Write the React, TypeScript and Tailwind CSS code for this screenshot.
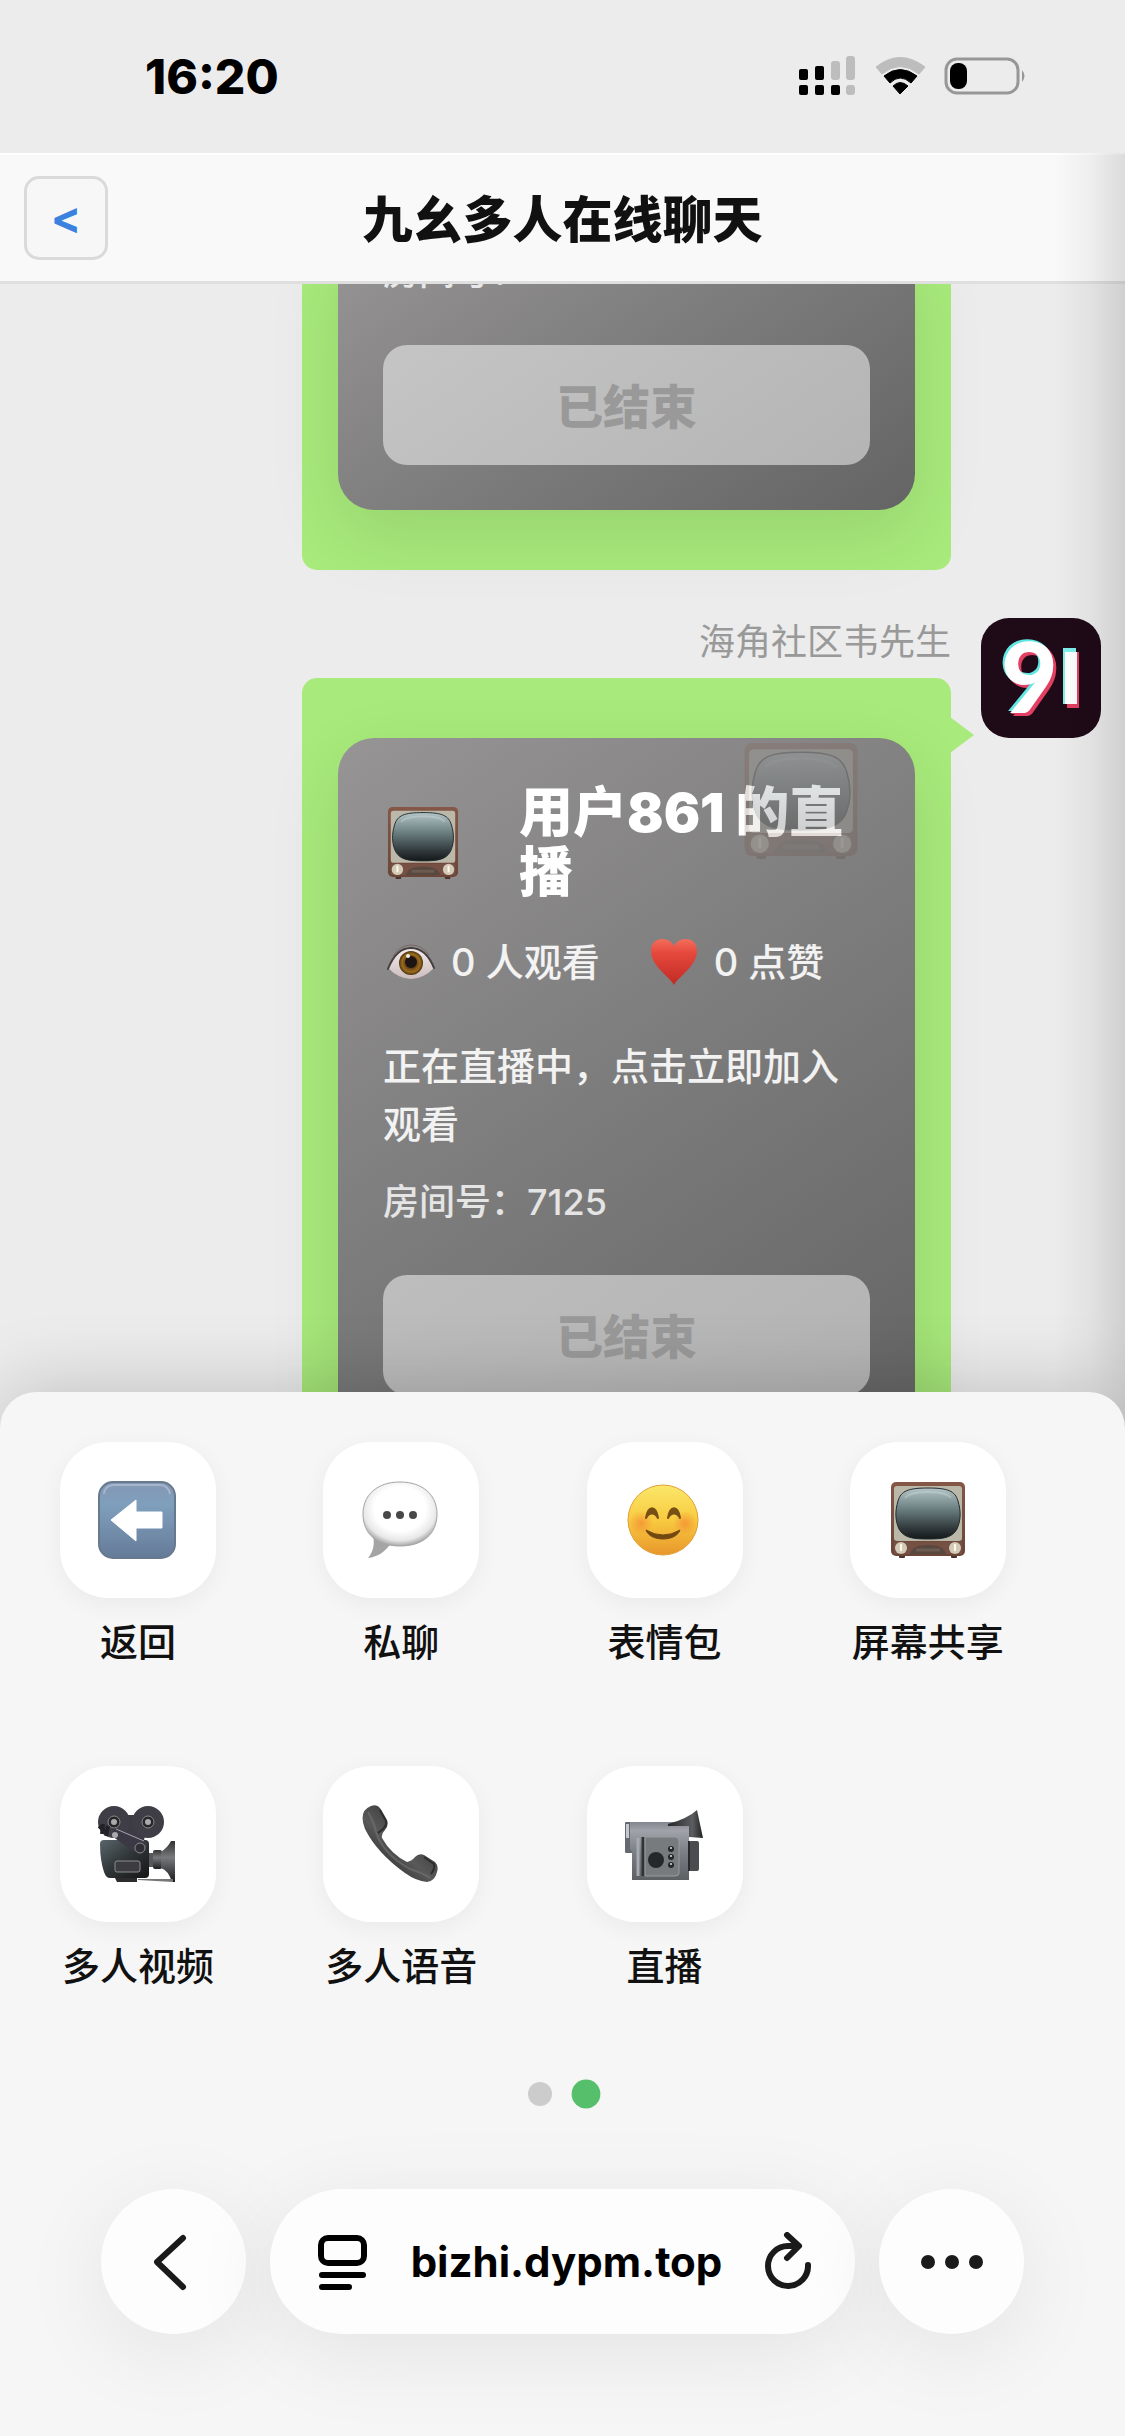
import { useState } from "react";
import type { ReactNode } from "react";

function StatusIcons() {
  return (
    <svg className="h-[42px] w-[230px]" viewBox="0 0 230 42" aria-hidden="true">
      <rect x="1" y="13" width="9" height="11" rx="2" />
      <rect x="17" y="10" width="9" height="14" rx="2" />
      <rect x="33" y="5" width="9" height="19" rx="3" fill="#bdbdbd" />
      <rect x="48" y="0" width="9" height="24" rx="3" fill="#bdbdbd" />
      <rect x="1" y="29" width="9" height="10" rx="2" />
      <rect x="17" y="29" width="9" height="10" rx="2" />
      <rect x="33" y="29" width="9" height="10" rx="2" />
      <rect x="48" y="29" width="9" height="10" rx="3" fill="#bdbdbd" />
      <path d="M78 11 Q102 -8 127 11 L121 18 Q102 3 84 18 Z" fill="#bdbdbd" stroke="#bdbdbd" strokeLinejoin="round" />
      <path d="M86 20 Q102 7 119 20 L113 27 Q102 17 92 27 Z" stroke="#000" strokeLinejoin="round" />
      <path d="M95 30 Q102 23 110 30 L102 38 Z" stroke="#000" strokeWidth="1" strokeLinejoin="round" />
      <rect x="148" y="3" width="72" height="34" rx="11" fill="none" stroke="#979797" strokeWidth="3" />
      <rect x="152" y="7" width="17" height="26" rx="8" />
      <path d="M224 14 Q229 20 224 26 Z" fill="#979797" />
    </svg>
  );
}

function TvIcon({ id, className }: { id: string; className: string }) {
  return (
    <svg className={className} viewBox="0 0 76 80" aria-hidden="true">
      <defs>
        <linearGradient id={`${id}-screen`} x1="0" y1="0" x2="0" y2="1">
          <stop offset="0" stopColor="#b4c5c7" />
          <stop offset="0.45" stopColor="#64787a" />
          <stop offset="0.8" stopColor="#30373a" />
          <stop offset="1" stopColor="#14191b" />
        </linearGradient>
        <linearGradient id={`${id}-wood`} x1="0" y1="0" x2="0" y2="1">
          <stop offset="0" stopColor="#845747" />
          <stop offset="1" stopColor="#6b4638" />
        </linearGradient>
      </defs>
      <rect x="9" y="74" width="6" height="4" rx="1" fill="#4a342c" />
      <rect x="61" y="74" width="6" height="4" rx="1" fill="#4a342c" />
      <rect x="1" y="2" width="74" height="74" rx="5" fill={`url(#${id}-wood)`} />
      <rect x="4" y="6" width="68" height="55" rx="3" fill="#bbb7a9" />
      <path
        d="M38 8 C58 8 65 11 68 21 C71 31 71 40 67 49 C62 58 53 59 38 59 C23 59 14 58 9 49 C5 40 5 31 8 21 C11 11 18 8 38 8Z"
        fill={`url(#${id}-screen)`}
        stroke="#22292b"
        strokeWidth="1"
      />
      <path d="M15 18 C20 10 56 10 61 18" fill="none" stroke="#dbe7e7" strokeOpacity="0.3" strokeWidth="2" />
      <path d="M4 62 H72 V74 H4Z" fill="#765143" />
      <path d="M20 74 Q22 65 38 65 Q54 65 56 74Z" fill="#574840" />
      <path d="M26 70 H50" stroke="#6d5a50" strokeWidth="3" />
      <circle cx="11" cy="68" r="6" fill="#d3cbb8" />
      <circle cx="65" cy="68" r="6" fill="#d3cbb8" />
      <path d="M11 64 V71 M65 64 V71" stroke="#fff9e9" strokeWidth="2" />
    </svg>
  );
}

function EyeIcon() {
  return (
    <svg className="h-9 w-12" viewBox="0 0 48 36" aria-hidden="true">
      <defs>
        <radialGradient id="iris">
          <stop offset="0.3" stopColor="#4d2c12" />
          <stop offset="0.75" stopColor="#9b6c1d" />
          <stop offset="1" stopColor="#4b3212" />
        </radialGradient>
        <linearGradient id="eyeball" x1="0" y1="0" x2="0" y2="1">
          <stop offset="0" stopColor="#f4eeee" />
          <stop offset="1" stopColor="#cdbcbe" />
        </linearGradient>
      </defs>
      <path d="M1 24 Q9 3 24 3 Q39 3 47 24 Q36 35 24 35 Q12 35 1 24Z" fill="url(#eyeball)" />
      <circle cx="24" cy="19" r="12" fill="url(#iris)" />
      <circle cx="24" cy="18" r="6" fill="#1d1513" />
      <circle cx="21" cy="12" r="2" fill="#eee" />
      <path d="M1 25 Q9 4 24 4 Q39 4 47 24" fill="none" stroke="#453d3d" strokeWidth="2" strokeLinecap="round" />
      <path d="M6 12 Q13 1 24 1 Q35 1 42 11" fill="none" stroke="#786968" strokeWidth="1" />
    </svg>
  );
}

function HeartIcon() {
  return (
    <svg className="size-12" viewBox="0 0 48 48" aria-hidden="true">
      <defs>
        <linearGradient id="heart" x1="0" y1="0" x2="0" y2="1">
          <stop offset="0" stopColor="#f46e5c" />
          <stop offset="0.3" stopColor="#e5493d" />
          <stop offset="1" stopColor="#c02a24" />
        </linearGradient>
      </defs>
      <path
        d="M24 47 C19 38 1 28 1 13 C1 5 6 1 12 1 C18 1 22 4 24 8 C26 4 30 1 36 1 C42 1 47 5 47 13 C47 28 29 38 24 47Z"
        fill="url(#heart)"
      />
    </svg>
  );
}

function BackArrowIcon() {
  return (
    <svg className="size-20" viewBox="0 0 80 80" aria-hidden="true">
      <defs>
        <linearGradient id="arrow-bg" x1="0" y1="0" x2="0" y2="1">
          <stop offset="0" stopColor="#8497b3" />
          <stop offset="0.3" stopColor="#7f9fbd" />
          <stop offset="1" stopColor="#657b98" />
        </linearGradient>
      </defs>
      <rect x="1" y="2" width="76" height="76" rx="14" fill="url(#arrow-bg)" stroke="#66798f" strokeWidth="2" />
      <path d="M6 14 Q7 5 16 5 H62 Q70 5 72 14" fill="none" stroke="#a5b5cb" strokeWidth="2" />
      <path d="M13 40 L38 20 V32 H64 V48 H38 V61Z" fill="#fff" stroke="#fff" strokeWidth="1" strokeLinejoin="round" />
    </svg>
  );
}

function ChatIcon() {
  return (
    <svg className="size-20" viewBox="0 0 80 80" aria-hidden="true">
      <defs>
        <radialGradient id="chat-fill" cx="0.5" cy="0.42" r="0.58">
          <stop offset="0.6" stopColor="#fff" />
          <stop offset="0.85" stopColor="#e8e8e8" />
          <stop offset="1" stopColor="#a8a8a8" />
        </radialGradient>
      </defs>
      <path d="M12 55 C14 65 12 72 7 78 C17 77 25 71 30 63Z" fill="#a4a4a4" />
      <path
        d="M39 2 C62 2 76 15 76 34 C76 54 62 66 39 66 C16 66 2 54 2 34 C2 15 16 2 39 2Z"
        fill="url(#chat-fill)"
        stroke="#a5a5a5"
        strokeWidth="1"
      />
      <circle cx="26" cy="35" r="4" fill="#484848" />
      <circle cx="39" cy="35" r="4" fill="#484848" />
      <circle cx="52" cy="35" r="4" fill="#484848" />
    </svg>
  );
}

function SmileIcon() {
  return (
    <svg className="size-20" viewBox="0 0 80 80" aria-hidden="true">
      <defs>
        <linearGradient id="face" x1="0" y1="0" x2="0" y2="1">
          <stop offset="0" stopColor="#fbe76a" />
          <stop offset="0.5" stopColor="#f8cb40" />
          <stop offset="1" stopColor="#e8962b" />
        </linearGradient>
        <radialGradient id="blush">
          <stop offset="0" stopColor="#f48632" stopOpacity="0.7" />
          <stop offset="1" stopColor="#f48632" stopOpacity="0" />
        </radialGradient>
      </defs>
      <circle cx="38" cy="40" r="35" fill="url(#face)" stroke="#dfa137" strokeWidth="1" />
      <circle cx="16" cy="43" r="12" fill="url(#blush)" />
      <circle cx="60" cy="43" r="12" fill="url(#blush)" />
      <path d="M21 38 C23 25 31 25 33 38 C30 32 24 32 21 38Z M43 38 C45 25 53 25 55 38 C52 32 46 32 43 38Z" fill="#785014" stroke="#785014" strokeWidth="2" strokeLinejoin="round" />
      <path d="M21 50 Q38 60 55 50 C51 62 25 62 21 50Z" fill="#714811" stroke="#714811" strokeWidth="1" strokeLinejoin="round" />
    </svg>
  );
}

function MovieCameraIcon() {
  return (
    <svg className="size-20" viewBox="0 0 80 80" aria-hidden="true">
      <defs>
        <linearGradient id="movie-body" x1="0" y1="0" x2="1" y2="1">
          <stop offset="0" stopColor="#59666c" />
          <stop offset="0.5" stopColor="#303537" />
          <stop offset="1" stopColor="#151515" />
        </linearGradient>
        <linearGradient id="movie-lens" x1="0" y1="0" x2="0" y2="1">
          <stop offset="0" stopColor="#333" />
          <stop offset="0.4" stopColor="#77797c" />
          <stop offset="1" stopColor="#1c1c1e" />
        </linearGradient>
      </defs>
      <path d="M16 11 H50 L46 37 H20Z" fill="#3e3b45" />
      <circle cx="16" cy="18" r="16" fill="#3f3d46" />
      <circle cx="50" cy="18" r="16" fill="#3f3d46" />
      {[16, 50].map(cx => (
        <g key={cx}>
          <circle cx={cx} cy="18" r="6" fill="#27262b" stroke="#888" strokeWidth="1" />
          <circle cx={cx} cy="18" r="3" fill="#aaa" />
        </g>
      ))}
      <path d="M2 40 Q2 36 6 36 H47 Q51 36 51 40 V70 Q51 74 47 74 H12 Q8 74 6 68 Q2 56 2 40Z" fill="url(#movie-body)" />
      <path d="M17 74 H39 V78 H19Z" fill="#2c2c2c" />
      <rect x="17" y="57" width="25" height="11" rx="2" fill="#3d3c40" stroke="#8d8d8d" strokeWidth="1" />
      <path d="M1 22 L8 28 M5 20 L4 30 M10 22 L8 32" stroke="#232228" strokeWidth="4" />
      <path d="M15 24 L47 37 Q52 42 45 48 Q40 51 33 46 L14 32Z" fill="#3b3943" />
      <path d="M18 25 L46 37" stroke="#a9a5b0" strokeWidth="1" />
      <circle cx="17" cy="31" r="3" fill="#aaa7af" />
      <circle cx="42" cy="44" r="5" fill="#302f36" stroke="#8a8891" strokeWidth="1" />
      <rect x="51" y="49" width="5" height="14" fill="#55575a" />
      <rect x="55" y="46" width="9" height="19" rx="2" fill="url(#movie-lens)" />
      <path d="M63 48 Q70 43 73 37 H77 V78 H74 Q70 66 63 64Z" fill="url(#movie-lens)" />
      <path d="M40 75 L75 75 V78 L40 76Z" fill="#777" />
    </svg>
  );
}

function PhoneIcon() {
  return (
    <svg className="size-20" viewBox="0 0 80 80" aria-hidden="true">
      <defs>
        <linearGradient id="handset" x1="0" y1="1" x2="0.7" y2="0.2">
          <stop offset="0.2" stopColor="#2a2a2a" />
          <stop offset="0.6" stopColor="#595959" />
          <stop offset="1" stopColor="#363636" />
        </linearGradient>
      </defs>
      <path
        d="M10 2 Q16 0 19 4 L26 16 Q28 22 24 26 Q20 30 21 34 Q30 50 46 58 Q51 57 54 53 Q58 49 63 51 L74 58 Q78 62 76 68 Q74 77 66 78 Q55 77 44 69 Q16 49 4 25 Q-3 7 10 2Z"
        fill="url(#handset)"
      />
      <path d="M7 8 Q13 18 15 28 Q22 50 49 65 Q62 69 69 74" fill="none" stroke="#737373" strokeWidth="2" opacity="0.6" />
      <path d="M19 6 L25 17 Q26 21 22 25 L17 29 M63 53 L73 60 Q74 65 70 70" fill="none" stroke="#2d2d2d" strokeWidth="2" />
    </svg>
  );
}

function CamcorderIcon() {
  return (
    <svg className="size-20" viewBox="0 0 80 80" aria-hidden="true">
      <defs>
        <linearGradient id="cam-body" x1="0" y1="0" x2="0" y2="1">
          <stop offset="0" stopColor="#82868e" />
          <stop offset="0.15" stopColor="#a0a3aa" />
          <stop offset="0.5" stopColor="#7c8087" />
          <stop offset="1" stopColor="#5c6063" />
        </linearGradient>
        <linearGradient id="cam-eye" x1="0" y1="0" x2="1" y2="0">
          <stop offset="0" stopColor="#26272a" />
          <stop offset="0.7" stopColor="#5c5d60" />
          <stop offset="1" stopColor="#222" />
        </linearGradient>
      </defs>
      <rect x="0" y="18" width="10" height="31" rx="1" fill="#666a70" />
      <rect x="1" y="20" width="3" height="14" fill="#c3c9d0" />
      <path d="M5 18 H64 V76 H7 V48 L5 45Z" fill="url(#cam-body)" />
      <path d="M13 34 V72" stroke="#a7aab0" strokeWidth="3" />
      <path d="M18 33 V72" stroke="#303336" strokeWidth="3" />
      <path d="M20 33 H50 Q54 33 54 37 V69 Q54 72 50 72 H20Z" fill="#777b7e" stroke="#999da1" strokeWidth="1" />
      <circle cx="31" cy="56" r="8" fill="#25282a" />
      {[45, 53, 61].map(cy => (
        <g key={cy}>
          <circle cx="46" cy={cy} r="3" fill="#25282a" />
          <circle cx="46" cy={cy - 1} r="1" fill="#e0e0d4" />
        </g>
      ))}
      <path d="M43 20 Q62 15 72 6 L78 34 L64 33 V22 H43Z" fill="url(#cam-eye)" />
      <rect x="64" y="37" width="10" height="30" rx="2" fill="#4a4c4f" />
      <path d="M64 37 V67" stroke="#292a2c" strokeWidth="2" />
    </svg>
  );
}

function Avatar() {
  return (
    <svg className="size-[120px] shrink-0 rounded-[28px] bg-[#1f0a18]" viewBox="0 0 120 120" role="img" aria-label="91">
      <text
        x="20"
        y="95"
        fontSize="98"
        fill="#fff"
        className="font-['Lato',sans-serif] font-black [filter:drop-shadow(-2px_-2px_0_#62e6e4)_drop-shadow(3px_3px_0_#e33f62)]"
      >
        9
      </text>
      <rect x="82" y="30" width="13" height="56" fill="#7ff0ed" />
      <rect x="86" y="34" width="12" height="56" fill="#e33f62" />
      <rect x="84" y="34" width="12" height="52" fill="#fff" />
    </svg>
  );
}

function EndedButton() {
  return (
    <button
      type="button"
      disabled
      className="mt-[46px] block h-[120px] w-full rounded-[24px] bg-white/50 pt-1 text-[47px] leading-[72px] font-extrabold text-[#999]"
    >
      已结束
    </button>
  );
}

function Bubble({ children, className }: { children: ReactNode; className: string }) {
  return <div className={`relative w-[649px] bg-[#a8ea7b] px-9 pb-[60px] ${className}`}>{children}</div>;
}

const cardStyle = "relative bg-linear-145 from-[#969494] to-[#646464] px-[45px] pb-[45px] text-white shadow-[0_24px_72px_rgba(0,0,0,0.1)]";

function LiveCard() {
  return (
    <div className={`${cardStyle} rounded-[36px] pt-[45px]`}>
      <div className="flex items-center gap-14">
        <div className="flex w-[80px] shrink-0 justify-center">
          <TvIcon id="tv-title" className="w-[72px]" />
        </div>
        <h2 className="flex-1 text-[54px] leading-[60px] font-black">用户861 的直播</h2>
      </div>
      <div className="mt-[30px] flex items-center gap-[50px] text-[38px] leading-[58px] font-medium text-white/90">
        <span className="ml-1 flex items-center gap-4"><EyeIcon />0 人观看</span>
        <span className="flex items-center gap-4"><HeartIcon />0 点赞</span>
      </div>
      <p className="mt-[46px] text-[38px] leading-[58px] font-medium text-white/90">正在直播中，点击立即加入观看</p>
      <p className="mt-[22px] text-[36px] leading-[54px] font-medium text-white/80">房间号：7125</p>
      <EndedButton />
      <TvIcon id="tv-mark" className="absolute top-0.5 right-[56px] w-[116px] opacity-20" />
    </div>
  );
}

const actions = [
  { label: "返回", icon: <BackArrowIcon /> },
  { label: "私聊", icon: <ChatIcon /> },
  { label: "表情包", icon: <SmileIcon /> },
  { label: "屏幕共享", icon: <TvIcon id="tv-share" className="h-20 w-[76px]" /> },
  { label: "多人视频", icon: <MovieCameraIcon /> },
  { label: "多人语音", icon: <PhoneIcon /> },
  { label: "直播", icon: <CamcorderIcon /> },
];

const barShadow = "bg-[#fdfdfd] shadow-[0_18px_90px_rgba(0,0,0,0.08)]";

export default function App() {
  const [page, setPage] = useState(1);

  return (
    <div className="flex h-screen flex-col overflow-hidden bg-[#ececec] font-['Inter','Noto_Sans_CJK_SC',sans-serif] text-[#111]">
      <div className="flex h-[153px] shrink-0 items-center justify-between pr-[97px] pl-[145px] text-black">
        <time className="text-[48px] font-extrabold">16:20</time>
        <StatusIcons />
      </div>

      <div className="relative flex min-h-0 flex-1 flex-col">
        <header className="relative z-10 grid shrink-0 grid-cols-[84px_1fr_84px] items-center border-t-2 border-b-3 border-t-white border-b-[#dfdfdf] bg-[#f9f9f9] px-6 py-[21px]">
          <button
            type="button"
            aria-label="返回"
            className="size-[84px] rounded-[15px] border-3 border-[#dadada] bg-[#f7f7f7] text-[45px] leading-[60px] font-bold text-[#3b82e0]"
          >
            &lt;
          </button>
          <h1 className="pt-1 text-center text-[50px] leading-[72px] font-black">九幺多人在线聊天</h1>
        </header>

        <main className="min-h-0 flex-1 overflow-hidden pr-6">
          <div className="mr-[150px] flex flex-col items-end">
            <Bubble className="rounded-b-[15px]">
              <div className={`${cardStyle} rounded-b-[36px]`}>
                <p className="-mt-[39px] text-[36px] leading-[54px] font-medium text-white/80">房间号：</p>
                <EndedButton />
              </div>
            </Bubble>
          </div>
          <div className="mt-12 flex items-start justify-end gap-[30px]">
            <div className="flex flex-col items-end">
              <p className="mb-3 text-[36px] leading-[48px] text-[#999]">海角社区韦先生</p>
              <Bubble className="rounded-[15px] pt-[60px]">
                <svg className="absolute top-[39px] -right-[23px] h-9 w-6" viewBox="0 0 24 36" aria-hidden="true">
                  <path d="M0 0 L24 18 L0 36Z" fill="#a8ea7b" />
                </svg>
                <LiveCard />
              </Bubble>
            </div>
            <Avatar />
          </div>
        </main>
        <div className="pointer-events-none absolute inset-y-0 right-0 z-20 w-[72px] bg-linear-to-r from-transparent via-black/4 to-black/12" />
      </div>

      <section className="relative z-30 -mt-9 shrink-0 rounded-t-[36px] bg-[#f6f6f6] pt-[50px] pb-[102px] shadow-[0_-6px_75px_rgba(0,0,0,0.18)]">
        <div className="grid grid-cols-4 gap-x-12 gap-y-[95px] px-[60px]">
          {actions.map(a => (
            <button key={a.label} type="button" className="flex flex-col items-center justify-self-start">
              <span className="flex size-[156px] items-center justify-center rounded-[48px] bg-white shadow-[0_6px_24px_rgba(0,0,0,0.05)]">
                {a.icon}
              </span>
              <span className="mt-[15px] text-[38px] leading-[58px] font-medium">{a.label}</span>
            </button>
          ))}
        </div>

        <div className="mt-[85px] flex h-7 items-center justify-center gap-[22px]">
          {[0, 1].map(i => (
            <button
              key={i}
              type="button"
              aria-label={`${i + 1}`}
              onClick={() => setPage(i)}
              className={`size-6 rounded-full ${i === page ? "scale-120 bg-[#55bf6c]" : "bg-[#ccc]"}`}
            />
          ))}
        </div>

        <nav className="mt-[81px] flex items-center gap-6 px-[101px]">
          <button type="button" aria-label="后退" className={`flex size-[145px] shrink-0 items-center justify-center rounded-full ${barShadow}`}>
            <svg className="h-[60px] w-10" viewBox="0 0 40 60" fill="none" stroke="#1a1a1a" strokeWidth="6" strokeLinecap="round" strokeLinejoin="round">
              <path d="M29 6 L3 30 L29 55" />
            </svg>
          </button>
          <div className={`flex h-[145px] flex-1 items-center justify-between pr-[42px] pl-[46px] ${barShadow} rounded-full`}>
            <button type="button" aria-label="页面菜单">
              <svg className="h-[60px] w-[52px]" viewBox="0 0 52 60" fill="none" stroke="#000" strokeWidth="6" strokeLinecap="round">
                <rect x="5" y="6" width="43" height="25" rx="7" />
                <path d="M6 43 H47 M6 55 H33" />
              </svg>
            </button>
            <span className="text-[42px] leading-[60px] font-bold text-black">bizhi.dypm.top</span>
            <button type="button" aria-label="刷新">
              <svg className="h-[60px] w-[48px]" viewBox="0 0 48 60" fill="none" stroke="#1a1a1a" strokeWidth="6" strokeLinecap="round" strokeLinejoin="round">
                <path d="M43 33 A20 20 0 1 1 23 14 H33 M22 3 L34 14 L22 26" />
              </svg>
            </button>
          </div>
          <button type="button" aria-label="更多" className={`flex size-[145px] shrink-0 items-center justify-center rounded-full ${barShadow}`}>
            <svg className="h-4 w-[62px]" viewBox="0 0 62 16" fill="#1a1a1a">
              <circle cx="7" cy="8" r="7" />
              <circle cx="31" cy="8" r="7" />
              <circle cx="55" cy="8" r="7" />
            </svg>
          </button>
        </nav>
      </section>
    </div>
  );
}
